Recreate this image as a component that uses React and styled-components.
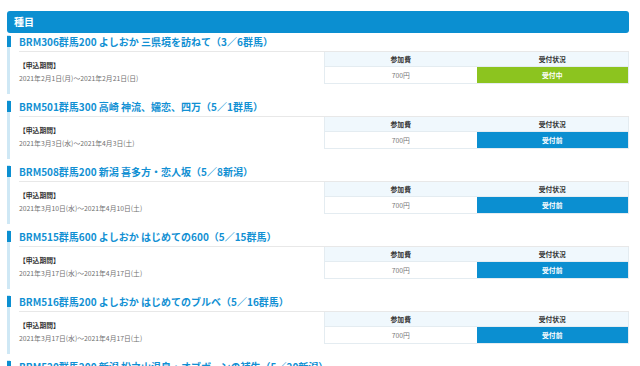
import React from "react";
import styled, { createGlobalStyle } from "styled-components";

const Global = createGlobalStyle`
  html, body { margin: 0; padding: 0; background: #ffffff; }
  body { font-family: "Noto Sans CJK JP", "Noto Sans", sans-serif; }
`;

const Page = styled.div`
  padding: 11px 11px 0 7px;
  overflow: hidden;
  height: 366px;
  box-sizing: border-box;
`;

const HeaderBar = styled.div`
  height: 22px;
  background: #0b8fd1;
  border-radius: 3px;
  color: #fff;
  font-weight: 700;
  font-size: 10px;
  line-height: 22px;
  padding-left: 7px;
`;

const List = styled.div`
  display: flex;
  flex-direction: column;
  gap: 6px;
  padding-top: 2px;
`;

const Item = styled.section`
  position: relative;
  border-left: 3px solid #cfe8f5;
  padding-left: 9px;
  padding-bottom: 10px;
`;

const Marker = styled.span`
  position: absolute;
  left: -3px;
  top: 1px;
  width: 4px;
  height: 11px;
  background: #0b8fd1;
`;

const Title = styled.h2`
  margin: 0;
  font-size: 10px;
  line-height: 14px;
  font-weight: 700;
  color: #1190d3;
  padding-bottom: 2px;
  border-bottom: 1px solid #e8e8e8;
  white-space: nowrap;
`;

const Body = styled.div`
  display: grid;
  grid-template-columns: 1fr 1fr;
`;

const Period = styled.div`
  padding-top: 7px;
  font-size: 6.8px;
  line-height: 12px;
`;

const PeriodLabel = styled.div`
  font-weight: 700;
  color: #333;
`;

const PeriodDate = styled.div`
  color: #707070;
  margin-top: 1px;
`;

const Table = styled.div`
  display: grid;
  grid-template-columns: 1fr 1fr;
  grid-template-rows: 15px 16px;
  border: 1px solid #e4ecf1;
  border-top: none;
  font-size: 6.8px;
`;

const HeadCell = styled.div`
  background: #f0f8fd;
  display: flex;
  align-items: center;
  justify-content: center;
  font-weight: 700;
  color: #333;
  border-bottom: 1px solid #e4ecf1;
`;

const Cell = styled.div`
  display: flex;
  align-items: center;
  justify-content: center;
  color: #777;
`;

const Status = styled.div`
  display: flex;
  align-items: center;
  justify-content: center;
  font-weight: 700;
  color: #fff;
  background: ${(p) => (p.$open ? "#8cc41f" : "#0b8fd1")};
`;

const items = [
  { title: "BRM306群馬200 よしおか 三県境を訪ねて（3／6群馬）", date: "2021年2月1日(月)～2021年2月21日(日)", open: true },
  { title: "BRM501群馬300 高崎 神流、嬬恋、四万（5／1群馬）", date: "2021年3月3日(水)～2021年4月3日(土)" },
  { title: "BRM508群馬200 新潟 喜多方・恋人坂（5／8新潟）", date: "2021年3月10日(水)～2021年4月10日(土)" },
  { title: "BRM515群馬600 よしおか はじめての600（5／15群馬）", date: "2021年3月17日(水)～2021年4月17日(土)" },
  { title: "BRM516群馬200 よしおか はじめてのブルベ（5／16群馬）", date: "2021年3月17日(水)～2021年4月17日(土)" },
  { title: "BRM520群馬200 新潟 松之山温泉・オブボーンの補生（5／20新潟）", date: "2021年3月20日(土)～2021年4月20日(火)" },
];

export default function App() {
  return (
    <>
      <Global />
      <Page>
        <HeaderBar>種目</HeaderBar>
        <List>
          {items.map((it, i) => (
            <Item key={i}>
              <Marker />
              <Title>{it.title}</Title>
              <Body>
                <Period>
                  <PeriodLabel>【申込期間】</PeriodLabel>
                  <PeriodDate>{it.date}</PeriodDate>
                </Period>
                <Table>
                  <HeadCell>参加費</HeadCell>
                  <HeadCell>受付状況</HeadCell>
                  <Cell>700円</Cell>
                  <Status $open={it.open}>{it.open ? "受付中" : "受付前"}</Status>
                </Table>
              </Body>
            </Item>
          ))}
        </List>
      </Page>
    </>
  );
}
